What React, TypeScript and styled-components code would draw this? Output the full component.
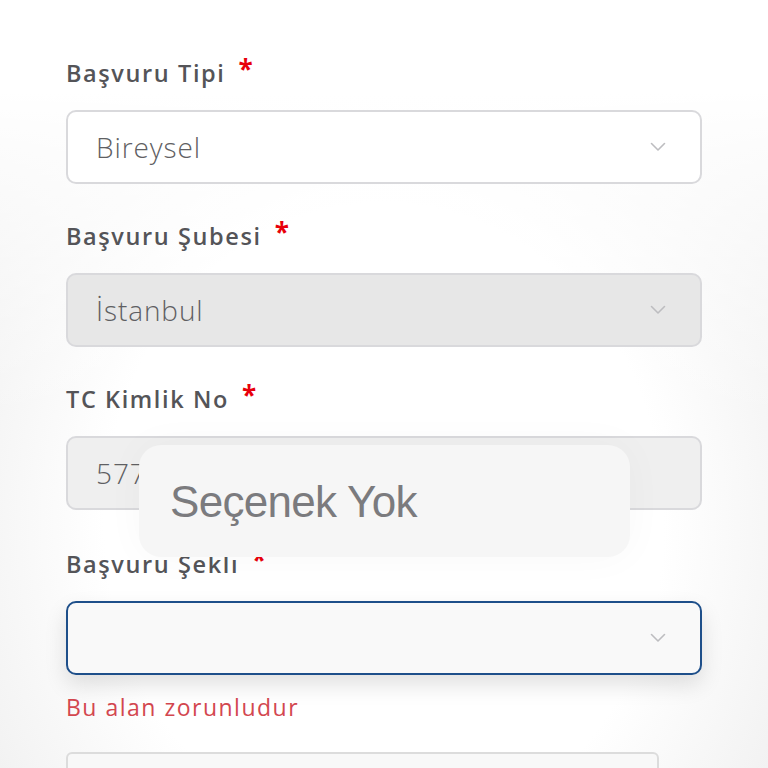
import styled, { createGlobalStyle } from "styled-components";

const GlobalStyle = createGlobalStyle`
  * { box-sizing: border-box; }
  html, body { margin: 0; padding: 0; }
  body {
    font-family: "Open Sans", "Noto Sans", sans-serif;
    background: #fff;
  }
`;

const Page = styled.div`
  position: relative;
  width: 768px;
  height: 768px;
  overflow: hidden;
  background:
    linear-gradient(to bottom, #ffffff 0%, #ffffff 12%, rgba(255, 255, 255, 0) 55%),
    radial-gradient(ellipse 70% 80% at 50% 68%, #ffffff 52%, #eaeaea 100%);
`;

const Form = styled.form`
  display: flex;
  flex-direction: column;
  padding: 57px 66px 0 66px;
  width: 100%;
`;

const Field = styled.div`
  display: flex;
  flex-direction: column;
  gap: 21px;
  margin-bottom: 36px;

  &:nth-child(3) {
    margin-bottom: 38px;
  }
`;

const Label = styled.label`
  display: flex;
  align-items: flex-start;
  gap: 13px;
  font-size: 23.5px;
  line-height: 32px;
  font-weight: 600;
  color: #545458;
  letter-spacing: 1.6px;
`;

const Star = styled.span`
  color: #e8000b;
  font-size: 26px;
  font-weight: 700;
  line-height: 26px;
  margin-top: -1px;
`;

const Control = styled.div<{ $variant?: "plain" | "disabled" | "readonly" | "focused" }>`
  position: relative;
  display: flex;
  align-items: center;
  justify-content: space-between;
  height: 74px;
  padding: 0 34px 0 28px;
  border-radius: 10px;
  border: 2px solid
    ${(p) => (p.$variant === "focused" ? "#1e4f8a" : "#d9d9dc")};
  background: ${(p) =>
    p.$variant === "disabled"
      ? "#e7e7e7"
      : p.$variant === "readonly"
      ? "#efefef"
      : p.$variant === "focused"
      ? "#f9f9f9"
      : "#ffffff"};
  box-shadow: ${(p) =>
    p.$variant === "focused" ? "0 10px 22px rgba(0, 0, 0, 0.12)" : "none"};
`;

const Value = styled.span`
  font-size: 28px;
  font-weight: 300;
  color: #5f5f63;
  letter-spacing: 0.9px;
`;

const Chevron = () => (
  <svg width="16" height="10" viewBox="0 0 16 10" fill="none">
    <path d="M1.5 1.5 L8 8 L14.5 1.5" stroke="#bdbdc0" strokeWidth="1.6" strokeLinecap="round" strokeLinejoin="round" />
  </svg>
);

const ErrorText = styled.div`
  margin-top: -20px;
  font-size: 23px;
  font-weight: 400;
  color: #d3474f;
  letter-spacing: 1.5px;
`;

const NextBox = styled.div`
  margin-top: 29px;
  width: 593px;
  height: 60px;
  border: 2px solid #dcdcdc;
  border-radius: 6px;
  background: #f8f8f8;
`;

const Popup = styled.div`
  position: absolute;
  left: 139px;
  top: 445px;
  width: 491px;
  height: 112px;
  border-radius: 22px;
  background: #f6f6f6;
  display: flex;
  align-items: center;
  padding-left: 31px;
  box-shadow: 0 0 40px rgba(0, 0, 0, 0.03);
`;

const PopupText = styled.span`
  font-family: "Liberation Sans", Arial, sans-serif;
  font-size: 44px;
  letter-spacing: -0.7px;
  color: #7b7b7e;
  margin-top: 2px;
`;

export default function App() {
  return (
    <>
      <GlobalStyle />
      <Page>
        <Form>
          <Field>
            <Label>
              Başvuru Tipi <Star>*</Star>
            </Label>
            <Control $variant="plain">
              <Value>Bireysel</Value>
              <Chevron />
            </Control>
          </Field>
          <Field>
            <Label>
              Başvuru Şubesi <Star>*</Star>
            </Label>
            <Control $variant="disabled">
              <Value>İstanbul</Value>
              <Chevron />
            </Control>
          </Field>
          <Field>
            <Label>
              TC Kimlik No <Star>*</Star>
            </Label>
            <Control $variant="readonly">
              <Value>577</Value>
            </Control>
          </Field>
          <Field>
            <Label>
              Başvuru Şeklı <Star>*</Star>
            </Label>
            <Control $variant="focused">
              <span />
              <Chevron />
            </Control>
          </Field>
          <ErrorText>Bu alan zorunludur</ErrorText>
          <NextBox />
        </Form>
        <Popup>
          <PopupText>Seçenek Yok</PopupText>
        </Popup>
      </Page>
    </>
  );
}
